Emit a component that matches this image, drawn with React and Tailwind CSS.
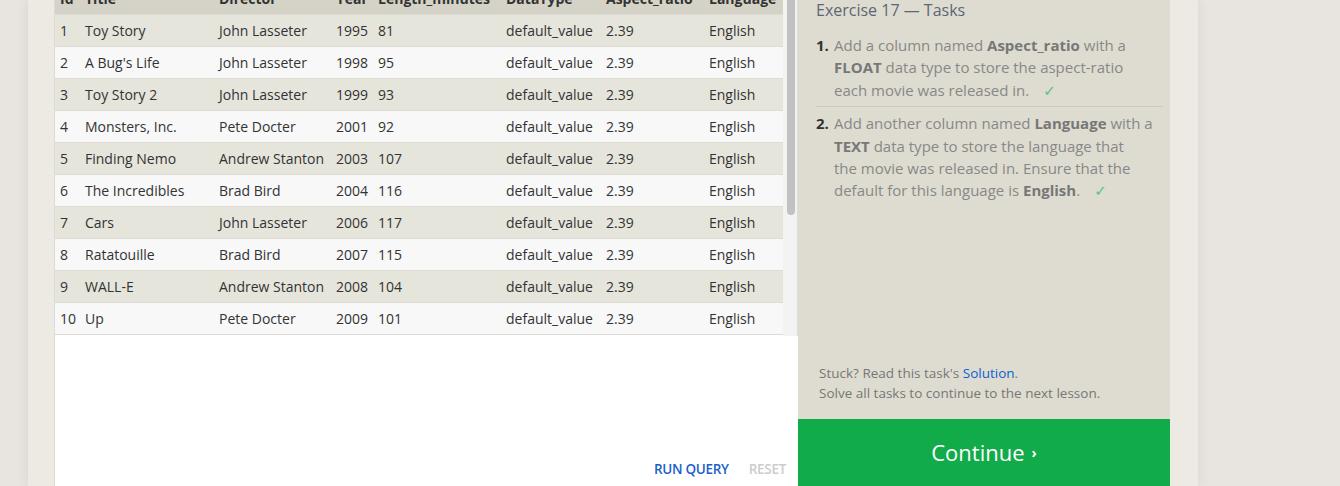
import React from 'react';

const movies = [
  [1, 'Toy Story', 'John Lasseter', 1995, 81],
  [2, "A Bug's Life", 'John Lasseter', 1998, 95],
  [3, 'Toy Story 2', 'John Lasseter', 1999, 93],
  [4, 'Monsters, Inc.', 'Pete Docter', 2001, 92],
  [5, 'Finding Nemo', 'Andrew Stanton', 2003, 107],
  [6, 'The Incredibles', 'Brad Bird', 2004, 116],
  [7, 'Cars', 'John Lasseter', 2006, 117],
  [8, 'Ratatouille', 'Brad Bird', 2007, 115],
  [9, 'WALL-E', 'Andrew Stanton', 2008, 104],
  [10, 'Up', 'Pete Docter', 2009, 101]
];

const headers = ['Id', 'Title', 'Director', 'Year', 'Length_minutes', 'DataType', 'Aspect_ratio', 'Language'];

const cols = 'grid grid-cols-[25px_134px_117px_42px_128px_100px_103px_79px]';

const Check = () => <span className="ml-[14px] text-[#5fc07f]">✓</span>;

const Bold = ({ children }) => <b className="font-bold text-[#777]">{children}</b>;

const ResultsTable = () => (
  <div className="flex h-[336px] overflow-hidden">
    <div className="w-[728px] -mt-[18px]">
      <div className={`${cols} h-[32px] items-center bg-[#d5d3c7] font-bold text-[#333]`}>
        {headers.map((h) => (
          <div key={h} className="pl-[5px] whitespace-nowrap overflow-hidden">{h}</div>
        ))}
      </div>
      {movies.map((m, i) => (
        <div
          key={m[0]}
          className={`${cols} h-[32px] items-center border-t border-[#dddbd4] text-[#333] ${
            i % 2 === 0 ? 'bg-[#e6e5dc]' : 'bg-[#f8f8f8]'
          }`}
        >
          {[...m, 'default_value', '2.39', 'English'].map((v, j) => (
            <div key={j} className="pl-[5px] whitespace-nowrap">{v}</div>
          ))}
        </div>
      ))}
      <div className="border-t border-[#dddbd4]" />
    </div>
    <div className="w-[15px] bg-[#f3f3f3] border-r border-[#dcdcdc] pl-[4px]">
      <div className="w-[8px] h-[215px] rounded-b-full bg-[#c1c1c1]" />
    </div>
  </div>
);

export default function App() {
  return (
    <div
      className="h-[486px] w-[1340px] overflow-hidden bg-[#e8e4e0] text-[14px]"
      style={{ fontFamily: '"Open Sans", "DejaVu Sans", sans-serif' }}
    >
      <div className="ml-[28px] w-[1170px] h-full bg-[#ede9e3] flex pl-[26px] pr-[28px] shadow-[0_0_14px_rgba(0,0,0,0.07)]">
        <div className="w-[744px] h-full bg-white border-l border-[#dedbd2] flex flex-col">
          <ResultsTable />
          <div className="flex-1 flex items-end justify-end gap-[20px] pr-[12px] pb-[7px] text-[13.5px] font-semibold tracking-[-0.3px]">
            <span className="text-[#1b5fc9]">RUN QUERY</span>
            <span className="text-[#cccccc]">RESET</span>
          </div>
        </div>
        <div className="w-[372px] h-full bg-[#dedcd0] flex flex-col">
          <div className="flex-1 pl-[18px] pr-[7px]">
            <h2 className="text-[16px] leading-[20px] text-[#5d6577]">Exercise 17 — Tasks</h2>
            <ol className="mt-[14px] text-[15px] leading-[22.4px] text-[#888]">
              <li className="flex pb-[5px] border-b border-[#ccc9bd]">
                <span className="w-[18px] shrink-0 font-bold text-[#333]">1.</span>
                <span className="whitespace-nowrap">
                  Add a column named <Bold>Aspect_ratio</Bold> with a<br />
                  <Bold>FLOAT</Bold> data type to store the aspect-ratio<br />
                  each movie was released in.
                  <Check />
                </span>
              </li>
              <li className="flex pt-[5px]">
                <span className="w-[18px] shrink-0 font-bold text-[#333]">2.</span>
                <span className="whitespace-nowrap">
                  Add another column named <Bold>Language</Bold> with a<br />
                  <Bold>TEXT</Bold> data type to store the language that<br />
                  the movie was released in. Ensure that the<br />
                  default for this language is <Bold>English</Bold>.
                  <Check />
                </span>
              </li>
            </ol>
          </div>
          <div className="pl-[21px] pb-[16px] text-[13.5px] leading-[20px] text-[#777]">
            <div>
              Stuck? Read this task's <span className="text-[#0b5fd0]">Solution</span>.
            </div>
            <div>Solve all tasks to continue to the next lesson.</div>
          </div>
          <div className="h-[67px] bg-[#12ab4a] flex items-center justify-center text-white">
            <span className="text-[22px]">Continue</span>
            <span className="ml-[7px] text-[14px] font-bold">›</span>
          </div>
        </div>
      </div>
    </div>
  );
}
